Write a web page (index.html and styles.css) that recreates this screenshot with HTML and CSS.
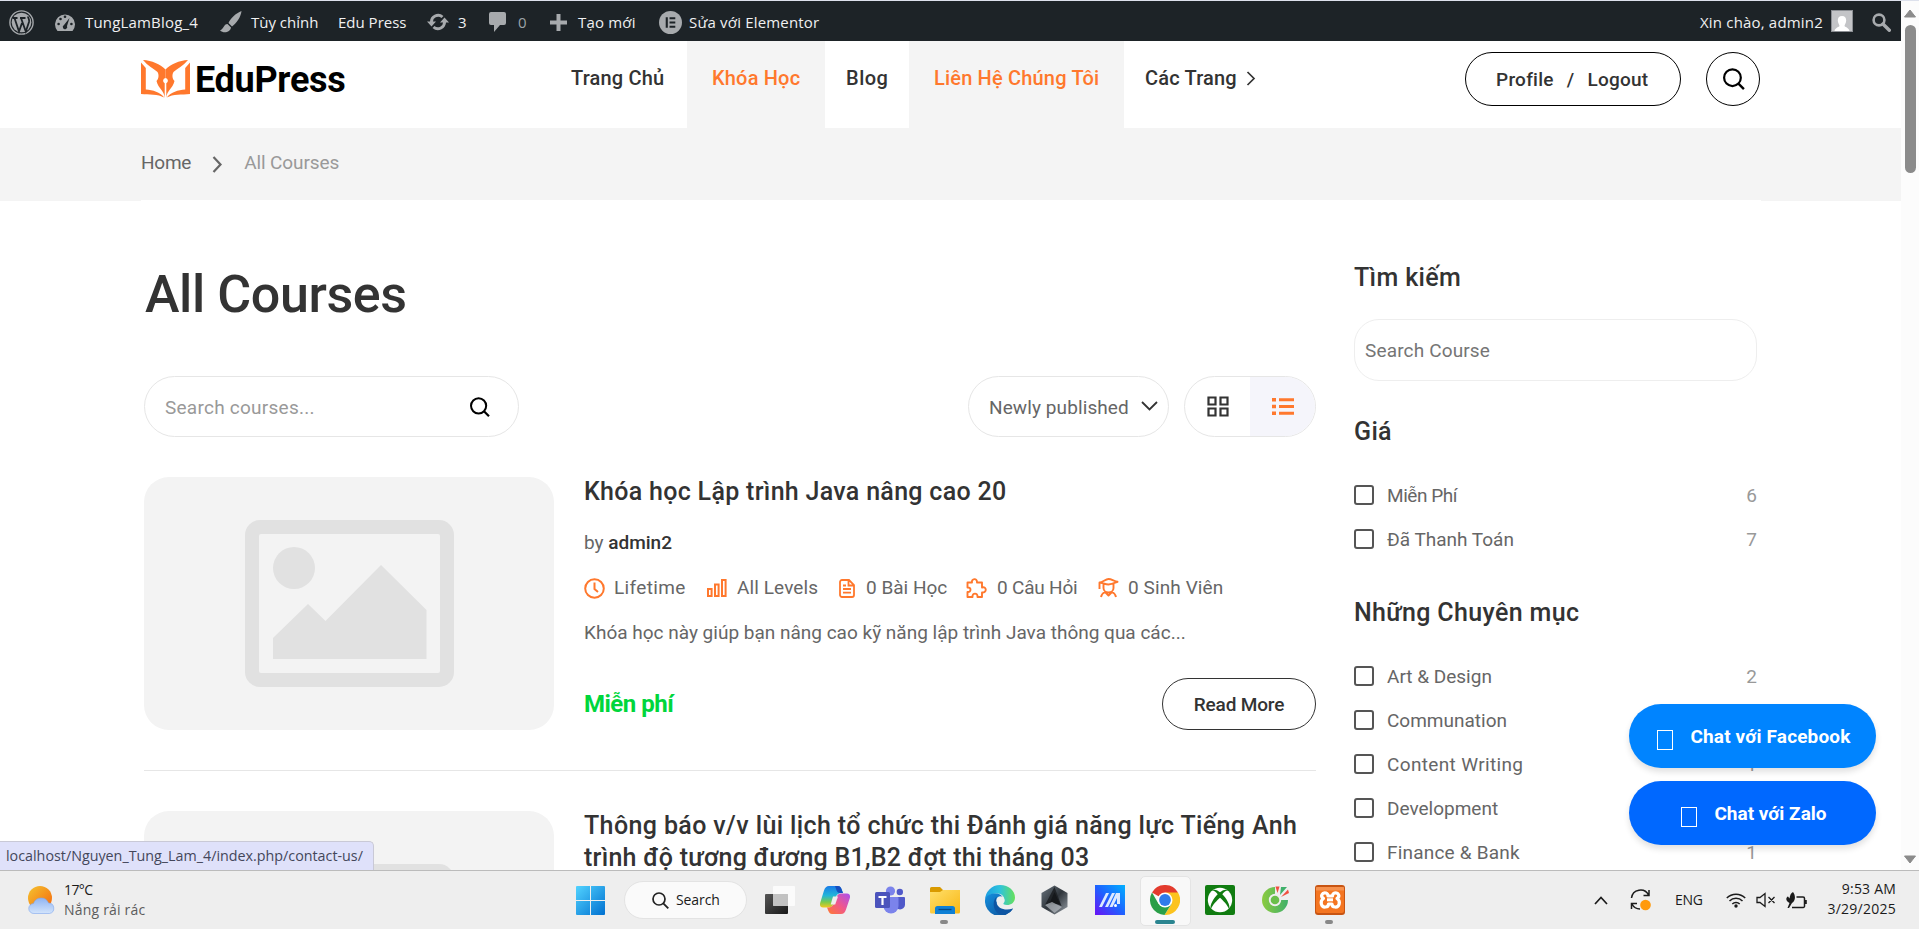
FILE: index.html
```html
<!DOCTYPE html>
<html lang="vi">
<head>
<meta charset="utf-8">
<title>All Courses</title>
<link rel="stylesheet" href="styles.css">
</head>
<body>
<svg width="0" height="0" class="defs">
  <defs>
    <symbol id="mag" viewBox="0 0 20 20"><circle cx="8.6" cy="8.8" r="7.6" fill="none" stroke="currentColor" stroke-width="2"/><path d="M14 14.2l5 5" stroke="currentColor" stroke-width="2.2"/></symbol>
    <symbol id="photo" viewBox="0 0 410 253">
      <rect x="101" y="43" width="209" height="167" rx="15" fill="#e1e1e1"/>
      <rect x="115" y="57" width="181" height="139" rx="2" fill="#f3f3f3"/>
      <circle cx="150" cy="91" r="21" fill="#e1e1e1"/>
      <path d="M129 161l35-34 17.500 17 55.500-56 45.500 45v49H129z" fill="#e1e1e1"/>
    </symbol>
    <linearGradient id="win" x1="0" y1="0" x2="1" y2="1"><stop offset="0" stop-color="#52d3ff"/><stop offset="1" stop-color="#0070d0"/></linearGradient>
    <linearGradient id="sun" x1="0" y1="0" x2="1" y2="1"><stop offset="0" stop-color="#f4c430"/><stop offset="1" stop-color="#f5650c"/></linearGradient>
    <linearGradient id="cloud" x1="0" y1="0" x2="0" y2="1"><stop offset="0" stop-color="#8fb4f2"/><stop offset="1" stop-color="#d3e4fb"/></linearGradient>
    <linearGradient id="tvd" x1="0" y1="0" x2="1" y2="1"><stop offset="0" stop-color="#555"/><stop offset="1" stop-color="#181818"/></linearGradient>
    <linearGradient id="cpA" x1="0" y1="0" x2="0" y2="1"><stop offset="0" stop-color="#1a7be8"/><stop offset=".45" stop-color="#22b6d8"/><stop offset=".75" stop-color="#7ccb4c"/><stop offset="1" stop-color="#f3c81f"/></linearGradient>
    <linearGradient id="cpB" x1="0" y1="1" x2="1" y2="0"><stop offset="0" stop-color="#ff7a2e"/><stop offset=".5" stop-color="#f0578c"/><stop offset="1" stop-color="#a94ff0"/></linearGradient>
    <linearGradient id="fold" x1="0" y1="0" x2="1" y2="1"><stop offset="0" stop-color="#ffdf6b"/><stop offset="1" stop-color="#f8b714"/></linearGradient>
    <linearGradient id="edgeA" x1="0" y1="0" x2="1" y2="0"><stop offset="0" stop-color="#1b9de2"/><stop offset=".5" stop-color="#2fc3dc"/><stop offset="1" stop-color="#66e05a"/></linearGradient>
    <linearGradient id="edgeB" x1="0" y1="0" x2="1" y2="1"><stop offset="0" stop-color="#1590df"/><stop offset="1" stop-color="#0b4c94"/></linearGradient>
    <linearGradient id="hex" x1="0" y1="0" x2="1" y2="1"><stop offset="0" stop-color="#6b7680"/><stop offset=".5" stop-color="#30363c"/><stop offset="1" stop-color="#98a0a8"/></linearGradient>
    <linearGradient id="ma" x1="0" y1="1" x2="1" y2="0"><stop offset="0" stop-color="#6a11f5"/><stop offset=".5" stop-color="#1e62ff"/><stop offset="1" stop-color="#00b0ff"/></linearGradient>
    <linearGradient id="coc" x1="0" y1="0" x2="1" y2="0"><stop offset="0" stop-color="#8ccb3f"/><stop offset="1" stop-color="#3fb06a"/></linearGradient>
  </defs>
</svg>

<div class="window-edge"></div>
<div class="viewport">
  <div class="page">
    <div class="adminbar">
      <div class="ab"><svg width="25" height="25" viewBox="0 0 25 25"><circle cx="12.500" cy="12.500" r="11.600" fill="none" stroke="#a7aaad" stroke-width="1.400"/><circle cx="12.500" cy="12.500" r="9.800" fill="#a7aaad"/><path d="M3.500 8h5M11 8h5.500M5.500 8l4.500 13.500 3-8.500M12 8l4.800 13.500L20 12c.8-3-1-3.500-1-5.500" fill="none" stroke="#1d2327" stroke-width="1.800"/></svg></div>
      <div class="ab"><svg width="20" height="18" viewBox="0 0 20 18"><path d="M2.500 18A10 10 0 1 1 17.500 18z" fill="#a7aaad"/><g fill="#1d2327"><circle cx="3.600" cy="11" r="1.300"/><circle cx="5.500" cy="6" r="1.300"/><circle cx="10" cy="3.800" r="1.300"/><circle cx="16.400" cy="11" r="1.300"/><path d="M14.500 5l-2.500 8a2.200 2.200 0 1 1-3-1z"/></g></svg><span class="g10 w1">TungLamBlog_4</span></div>
      <div class="ab"><svg width="22" height="22" viewBox="0 0 22 22" fill="#a7aaad"><path d="M21.500 0C16 2 10 8 8.500 12l3.500 3.500C16 13 21 6 21.500 0zM7.500 13c-4 0-3.500 5-7.500 6.500 4 3.500 10.500 1.500 11-3z"/></svg><span class="g9">Tùy chỉnh</span></div>
      <div class="ab"><span>Edu Press</span></div>
      <div class="ab"><svg width="22" height="18" viewBox="0 0 22 18"><path d="M4.500 9.500A6.600 6.600 0 0 1 15.500 4M17.500 8.500A6.600 6.600 0 0 1 6.500 14" fill="none" stroke="#a7aaad" stroke-width="2.900"/><path d="M0 8.500h9l-4.500 5zM13 9.500h9L17.500 4.500z" fill="#a7aaad"/></svg><span class="g9">3</span></div>
      <div class="ab dim"><svg width="17" height="20" viewBox="0 0 17 20"><path d="M2 0h13a2 2 0 0 1 2 2v9a2 2 0 0 1-2 2h-4l-6 7v-7H2a2 2 0 0 1-2-2V2a2 2 0 0 1 2-2z" fill="#a7aaad"/></svg><span class="g12">0</span></div>
      <div class="ab"><svg width="17" height="17" viewBox="0 0 17 17"><path d="M6.500 0h4v6.500H17v4h-6.500V17h-4v-6.500H0v-4h6.500z" fill="#a7aaad"/></svg><span class="g11 w1">Tạo mới</span></div>
      <div class="ab"><svg width="23" height="23" viewBox="0 0 24 24"><circle cx="12" cy="12" r="12" fill="#a7aaad"/><path d="M7 6.500h2.200v11H7zM11 6.500h6v2.200h-6zM11 10.900h6v2.200h-6zM11 15.300h6v2.200h-6z" fill="#1d2327"/></svg><span class="g7 w1">Sửa với Elementor</span></div>
      <div class="ab"><span class="w1">Xin chào, admin2</span><svg class="avatar" width="22" height="22" viewBox="0 0 22 22"><rect width="22" height="22" fill="#8c8f94"/><rect x="1" y="1" width="20" height="20" fill="#c3c4c7"/><path d="M11 6c3 0 4.200 2 4.200 4.500S13.500 15 13.500 16s4.500 1.500 5 5h-15c.5-3.500 5-4 5-5s-1.700-3-1.700-5.500S8 6 11 6z" fill="#fff"/></svg></div>
      <div class="ab"><svg width="19" height="19" viewBox="0 0 19 19"><circle cx="7" cy="7" r="5.400" fill="none" stroke="#a7aaad" stroke-width="2.600"/><path d="M11 11l6.300 6.300" stroke="#a7aaad" stroke-width="3.400" stroke-linecap="round"/></svg></div>
    </div>

    <header class="header">
      <a class="logo"><svg width="50" height="38" viewBox="0 0 50 38"><g fill="#ff782d"><path d="M0 2.500L4.800 8v21.500C12 30 19 32 23.200 37.500 17 34 8 35 0 34z"/><path d="M2 0c9 .5 17 4 22.500 9.500V18a2.800 2.800 0 0 0-.8 5.300V38C23 30 17.500 29 15.500 21c2.500-2.500 2.500-6.500 1-9C12.500 8.500 7 6 2 0z"/><path d="M49 2.500L44.200 8v21.500C37 30 30 32 25.800 37.500 32 34 41 35 49 34z"/><path d="M47 0c-9 .5-17 4-22.500 9.500V18a2.800 2.800 0 0 1 .8 5.300V38C26 30 31.500 29 33.500 21c-2.500-2.500-2.500-6.500-1-9C36.500 8.500 42 6 47 0z"/></g></svg><span>EduPress</span></a>
      <nav class="nav">
        <a class="n1">Trang Chủ</a><a class="n2 on">Khóa Học</a><a class="n3">Blog</a><a class="n4 on">Liên Hệ Chúng Tôi</a><a class="n5">Các Trang<svg width="10" height="15" viewBox="0 0 10 15"><path d="M1.500 1l6.500 6.500L1.500 14" fill="none" stroke="#333" stroke-width="1.700"/></svg></a>
      </nav>
      <div class="account"><a>Profile</a><i>/</i><a>Logout</a></div>
      <div class="round-search"><svg width="22" height="22"><use href="#mag"/></svg></div>
    </header>

    <div class="crumbs"><div class="crumbs-in"><span>Home</span><svg width="11" height="17" viewBox="0 0 11 17"><path d="M1.500 1l7 7.500-7 7.500" fill="none" stroke="#666" stroke-width="2.200"/></svg><span class="cur">All Courses</span></div></div>

    <div class="content">
      <main class="main">
        <h1>All Courses</h1>
        <div class="tools">
          <div class="search"><span>Search courses...</span><svg width="20" height="20"><use href="#mag"/></svg></div>
          <div class="select"><span>Newly published</span><svg width="17" height="10" viewBox="0 0 17 10"><path d="M1 1l7.500 7.500L16 1" fill="none" stroke="#333" stroke-width="1.800"/></svg></div>
          <div class="toggle">
            <div><svg width="22" height="21" viewBox="0 0 22 21" fill="none" stroke="#333" stroke-width="2.200"><path d="M1.500 1.500h7v7h-7zM13.500 1.500h7v7h-7zM1.500 12.500h7v7h-7zM13.500 12.500h7v7h-7z"/></svg></div>
            <div class="lit"><svg width="22" height="17" viewBox="0 0 22 17" fill="#ff782d"><path d="M0 0h4v3.500H0zM7 .3h15v3H7zM0 6.700h4v3.500H0zM7 7h15v3H7zM0 13.500h4V17H0zM7 13.700h15v3H7z"/></svg></div>
          </div>
        </div>

        <article class="card">
          <div class="thumb"><svg width="410" height="253"><use href="#photo"/></svg></div>
          <div class="info">
            <h3>Khóa học Lập trình Java nâng cao 20</h3>
            <div class="by">by <b>admin2</b></div>
            <div class="meta">
              <div class="m1"><svg width="21" height="21" viewBox="0 0 21 21" fill="none" stroke="#ff782d" stroke-width="2"><circle cx="10.500" cy="10.500" r="9.300"/><path d="M10.500 4.500v6.500l3.500 3"/></svg><span>Lifetime</span></div>
              <div class="m2"><svg width="20" height="18" viewBox="0 0 20 18" fill="none" stroke="#ff782d" stroke-width="2"><path d="M1 10h3.600v7H1zM8 5.500h3.600V17H8zM15 1h3.600v16H15z"/></svg><span>All Levels</span></div>
              <div class="m3"><svg width="16" height="19" viewBox="0 0 16 19" fill="none" stroke="#ff782d" stroke-width="1.800"><path d="M1 3a2 2 0 0 1 2-2h7l5 5v10a2 2 0 0 1-2 2H3a2 2 0 0 1-2-2zM9.500 1v5.500H15M4 6.500h3M4 10h8M4 13.700h8"/></svg><span>0 Bài Học</span></div>
              <div class="m4"><svg width="21" height="20" viewBox="0 0 21 20" fill="none" stroke="#ff782d" stroke-width="1.900" stroke-linejoin="round"><path d="M1.500 4.500H6c-1-4 5.500-5 5-0h5v5c5-1.500 5 5.500 0 5V19h-4.500c.5-4.500-5.500-4.500-5 0h-5v-5c4 .5 4-5 0-4.500z"/></svg><span>0 Câu Hỏi</span></div>
              <div class="m5"><svg width="21" height="20" viewBox="0 0 21 20" fill="none" stroke="#ff782d" stroke-width="1.900" stroke-linejoin="round"><path d="M1.500 4.500c3 0 6-3.500 9-3.500s6 2.500 9 2.800c-3 1.200-6 2.700-9 2.700S4.500 4.800 1.500 4.500zM1.500 4.500V11M5.500 6v4c0 3 2.500 4.500 5 4.500s5-1.500 5-4.500V6M3 19c.5-3 2-4 4-5l3.500 3.500L14 14c2 1 3.500 2 4 5"/></svg><span>0 Sinh Viên</span></div>
            </div>
            <p>Khóa học này giúp bạn nâng cao kỹ năng lập trình Java thông qua các...</p>
            <div class="foot"><strong>Miễn phí</strong><a class="more">Read More</a></div>
          </div>
        </article>
        <article class="card last">
          <div class="thumb"><svg width="410" height="253" class="low"><use href="#photo"/></svg></div>
          <div class="info"><h3>Thông báo v/v lùi lịch tổ chức thi Đánh giá năng lực Tiếng Anh<br><span class="tight">trình độ tương đương B1,B2 đợt thi tháng 03</span></h3></div>
        </article>
      </main>

      <aside class="side">
        <h2>Tìm kiếm</h2>
        <div class="side-search">Search Course</div>
        <h2>Giá</h2>
        <ul>
          <li><i></i><span class="narrow">Miễn Phí</span><em>6</em></li>
          <li><i></i><span>Đã Thanh Toán</span><em>7</em></li>
        </ul>
        <h2>Những Chuyên mục</h2>
        <ul>
          <li><i></i><span>Art &amp; Design</span><em>2</em></li>
          <li><i></i><span>Communation</span></li>
          <li><i></i><span class="wide">Content Writing</span><em>1</em></li>
          <li><i></i><span>Development</span></li>
          <li><i></i><span class="mid">Finance &amp; Bank</span><em>1</em></li>
        </ul>
      </aside>
    </div>
  </div>
  <div class="scrollbar">
    <svg width="14" height="9" viewBox="0 0 14 9"><path d="M7 1l5.500 7h-11z" fill="#8b8b8b" stroke="#8b8b8b" stroke-linejoin="round"/></svg>
    <div class="thumbbar"></div>
    <svg width="14" height="9" viewBox="0 0 14 9"><path d="M7 8L1.500 1h11z" fill="#8b8b8b" stroke="#8b8b8b" stroke-linejoin="round"/></svg>
  </div>
  <div class="chat">
    <a class="fb"><i></i>Chat với Facebook</a>
    <a class="zalo"><i></i>Chat với Zalo</a>
  </div>
  <div class="status">localhost/Nguyen_Tung_Lam_4/index.php/contact-us/</div>
</div>

<footer class="taskbar">
  <div class="weather"><svg width="27" height="28" viewBox="0 0 27 28"><circle cx="12" cy="12" r="12" fill="url(#sun)"/><path d="M6 27.500a5 5 0 0 1-.5-10A8 8 0 0 1 20.500 17a5.300 5.300 0 0 1 1 10.500z" fill="url(#cloud)" stroke="#7ea6ee" stroke-width=".6"/></svg><div><div class="temp">17°C</div><div class="cond">Nắng rải rác</div></div></div>
  <svg class="start" width="29" height="29" viewBox="0 0 29 29"><path d="M1 0h13v14H0V1a1 1 0 0 1 1-1zM15 0h13a1 1 0 0 1 1 1v13H15zM0 15h14v14H1a1 1 0 0 1-1-1zM15 15h14v13a1 1 0 0 1-1 1H15z" fill="url(#win)"/></svg>
  <div class="pill"><svg width="17" height="17" viewBox="0 0 17 17"><circle cx="7" cy="7" r="6" fill="none" stroke="#222" stroke-width="1.700"/><path d="M11.300 11.300l5 5" stroke="#222" stroke-width="1.900"/></svg><span>Search</span></div>
  <div class="apps">
    <div><svg width="30" height="28" viewBox="0 0 30 28"><rect y="8" width="23" height="20" rx="1" fill="url(#tvd)"/><rect x="8" width="22" height="20" rx="1" fill="#fff" opacity=".78"/><rect x="8" y="8" width="15" height="12" fill="#bbb" opacity=".7"/></svg></div>
    <div><svg width="30" height="28" viewBox="0 0 30 28"><path d="M9 0h9c3 0 3.500 3 5 7-5 0-6.500 1.500-7.500 5l-2 6c-1 2.500-2.500 3.500-5 3.500H3C0 21.500-.5 19 .3 16.500L4 4.500C5 1.500 6.500 0 9 0z" fill="url(#cpA)"/><path d="M21 28h-9c-3 0-3.500-3-5-6.500 5 0 6.500-2 7.500-5.500l2-5c1-2.500 2.500-3.500 5-3.500H27c3 0 3.500 2.500 2.700 5L26 23.500c-1 3-2.500 4.500-5 4.500z" fill="url(#cpB)"/><path d="M15 0h3c3 0 3.500 3 5 7h-3.500C17 7 16.500 4 15 0z" fill="#164fc0"/><path d="M13 10.500h5l-2.800 8h-4.500z" fill="#eee"/></svg></div>
    <div><svg width="30" height="28" viewBox="0 0 30 28"><circle cx="24.800" cy="6" r="3.200" fill="#5059c9"/><path d="M20 11h9a1 1 0 0 1 1 1v6.500a5 5 0 0 1-10 0z" fill="#5059c9"/><circle cx="15.500" cy="5" r="4.600" fill="#7b83eb"/><path d="M9 11h13.500a1 1 0 0 1 1 1v8a7.500 7.500 0 0 1-15 0z" fill="#7b83eb"/><rect y="6" width="15" height="16" rx="1.500" fill="#4b53bc"/><path d="M3.500 10h8v2H8.600v7H6.400v-7H3.500z" fill="#fff"/></svg></div>
    <div class="run"><svg width="30" height="28" viewBox="0 0 30 28"><path d="M1.500 1H10l3 3h15.500A1.500 1.500 0 0 1 30 5.500V9H0V2.500A1.500 1.500 0 0 1 1.500 1z" fill="#d99a00"/><path d="M0 6h10l3-2h17v22a1.500 1.500 0 0 1-1.500 1.500h-27A1.500 1.500 0 0 1 0 26z" fill="url(#fold)"/><path d="M5 28v-5.500a2.500 2.500 0 0 1 2.500-2.500h15a2.500 2.500 0 0 1 2.500 2.500V28z" fill="#0f80d5"/><path d="M8.500 23.500h13" stroke="#064a86" stroke-width="1.300"/></svg></div>
    <div><svg width="30" height="30" viewBox="0 0 30 30"><path d="M0 15A15 15 0 0 1 15 0c9 0 15 6 15 12.500 0 5-4 7.500-8 7.500-3 0-4.500-1-4-2.500 3-4 0-9-6-9C5 8.500 1 12 0 15z" fill="url(#edgeA)"/><path d="M0 15C1 10 5.500 8.500 11 8.500c4.500 0 8.500 3.500 7 8.500-.5-3-6-3-6.500 1.500C11 23 16 26.500 21 26c3-.4 5-1.600 7-2.500A15 15 0 0 1 0 15z" fill="url(#edgeB)"/><path d="M11.500 12C6 17 9 29 17 29.800 22 29.500 26 27 28 23.500 21 26 12 24 11.500 17z" fill="#0d55a3"/><circle cx="15.500" cy="15.500" r="4.200" fill="#eee"/></svg></div>
    <div><svg width="27" height="30" viewBox="0 0 27 30"><path d="M13.500.5L26.500 8v14l-13 7.500L.5 22V8z" fill="url(#hex)"/><path d="M13.500 2L4 20l7-3 9.500 4z" fill="#202428"/><path d="M13.500 7L19 19l-11 .5z" fill="#15181b"/><path d="M4 20l7-3 10 5-7.500 6z" fill="#b6bcc2" opacity=".7"/></svg></div>
    <div><svg width="30" height="30" viewBox="0 0 30 30"><rect width="30" height="30" fill="url(#ma)"/><path d="M4 22L11 8h3L7 22zM10 22L17 8h3l-7 14zM21 8h4v11h-3v-6l-4.500 9h-3z" fill="#dbe9ff"/><circle cx="20.500" cy="20.500" r="1.500" fill="#fff"/></svg></div>
    <div class="active"><svg width="30" height="30" viewBox="0 0 30 30"><path d="M15 15L2 7.500A15 15 0 0 1 28 7.500z" fill="#e33b2e"/><path d="M15 7.500h13A15 15 0 0 1 14.500 30L21.500 19z" fill="#fcc31e"/><path d="M2 7.500A15 15 0 0 0 14.500 30L21.500 18.800 8.500 18.800z" fill="#2a9f48"/><circle cx="15" cy="15" r="7.500" fill="#fff"/><circle cx="15" cy="15" r="5.900" fill="#2f7bea"/></svg></div>
    <div><svg width="30" height="30" viewBox="0 0 30 30"><rect width="30" height="30" rx="2" fill="#107c10"/><circle cx="15" cy="15" r="12.200" fill="#fff"/><path d="M6.500 5.500C9.500 3.500 13 5.500 15 7.200 17 5.500 20.500 3.500 23.500 5.500 21 5 18.500 7.500 17.300 9.300 21 13 26 20.500 24 24 22.500 20 18 15.500 15 12.800 12 15.500 7.500 20 6 24c-2-3.500 3-11 6.700-14.700C11.500 7.500 9 5 6.500 5.500z" fill="#107c10"/></svg></div>
    <div><svg width="30" height="30" viewBox="0 0 30 30"><path d="M15 2A13 13 0 1 0 28 15H20.500a5.500 5.500 0 1 1-5.500-5.500z" fill="url(#coc)"/><circle cx="15" cy="15" r="6.200" fill="#eee"/><circle cx="15" cy="15" r="4.300" fill="#6abf4b"/><path d="M15.500 1.500h4L17.500 8z" fill="#f04e3e"/><path d="M21 2h6l-7 8z" fill="#3fb06a"/><path d="M28 4.500l1 3.500-8 4z" fill="#f04e3e"/></svg></div>
    <div class="run"><svg width="30" height="30" viewBox="0 0 30 30"><rect width="30" height="30" rx="3" fill="#c85412"/><rect x="1" y="2" width="28" height="26" rx="2" fill="#f47521"/><path d="M1 2h28v3.500H1z" fill="#f9a56c" opacity=".6"/><path d="M11 8c-4-1-6 3.500-2.500 5.500C4.500 16 6 22.500 10.500 22c2 0 3-1 3-3h3.500c0 2 1 3 3 3 4.500.5 6-6 2-8.500C25.500 11.500 23.500 7 19.500 8c-1.500.5-2 1.500-2 3h-4.500c0-1.500-.5-2.500-2-3z" fill="none" stroke="#fff" stroke-width="3.200" stroke-linejoin="round"/><path d="M12 14.800h6" stroke="#fff" stroke-width="3"/></svg></div>
  </div>
  <div class="tray">
    <svg width="14" height="9" viewBox="0 0 14 9"><path d="M1 8l6-6.500L13 8" fill="none" stroke="#1b1b1b" stroke-width="1.700"/></svg>
    <svg class="t2" width="22" height="22" viewBox="0 0 22 22" fill="none" stroke="#1b1b1b" stroke-width="1.500"><path d="M1.500 9A9 9 0 0 1 18.500 6M19 1v5.500h-5.500M1.500 20v-5.500H7M2 15a9 9 0 0 0 8 5"/><circle cx="15.500" cy="16" r="5.300" fill="#ff9a0c" stroke="none"/></svg>
    <span class="t3">ENG</span>
    <svg class="t4" width="20" height="16" viewBox="0 0 20 16" fill="none" stroke="#1b1b1b" stroke-width="1.500"><path d="M.8 6a13 13 0 0 1 18.400 0M3.500 9a9.200 9.200 0 0 1 13 0M6.300 12a5.200 5.200 0 0 1 7.400 0"/><circle cx="10" cy="14" r="1.700" fill="#1b1b1b" stroke="none"/></svg>
    <svg class="t5" width="20" height="16" viewBox="0 0 20 16" fill="none" stroke="#1b1b1b" stroke-width="1.300"><path d="M1 5.500h3L9 1.500v13l-5-4H1zM12.500 5l6 6M18.500 5l-6 6"/></svg>
    <svg class="t6" width="21" height="17" viewBox="0 0 21 17"><path d="M10.500 5H17a1.500 1.500 0 0 1 1.500 1.500v7A1.500 1.500 0 0 1 17 15.500H6" fill="none" stroke="#1b1b1b" stroke-width="1.500"/><path d="M19 8h1.800v4H19zM7 0c2.500 3 3 8.500-1 11L3 16H1.500l2-5C-1 9 0 5 2 4.500l1.500 2C4 3 5 1 7 0z" fill="#1b1b1b"/></svg>
    <div class="clock"><div>9:53 AM</div><div class="date">3/29/2025</div></div>
  </div>
</footer>
</body>
</html>
```
FILE: styles.css
```css
*{box-sizing:border-box}
body{margin:0;width:1919px;height:929px;overflow:hidden;background:#fff;color:#666;font:400 19px/28px Roboto,sans-serif;display:flex;flex-direction:column}
h1,h2,h3,p,ul{margin:0;padding:0;font-weight:500;color:#333}
ul{list-style:none}
i,em{font-style:normal}
svg{display:block;flex:none}
.defs{position:absolute}
.window-edge{height:1px;background:#dde1ec;flex:none}
.viewport{position:relative;flex:none;height:869px;display:flex;overflow:hidden}
.page{width:1901px;height:869px;overflow:hidden}

.adminbar{height:40px;background:#1d2327;padding:2px 0 0 9px;display:grid;grid-template-columns:46px 165px 118px 89px 62px 61px 109px 1041px 172px 20px;align-items:center;color:#f0f0f1;font:15px/20px "Open Sans",sans-serif}
.ab{display:flex;align-items:center;height:26px;white-space:nowrap}
.dim{color:#9ca2a7}
.g7{margin-left:7px}.g9{margin-left:9px}.g10{margin-left:10px}.g11{margin-left:11px}.g12{margin-left:12px}
.w1{letter-spacing:.18px}
.avatar{margin-left:8px;margin-top:-3px}

.header{height:87px;padding-left:141px;display:flex;align-items:flex-start}
.logo{display:flex;width:410px;padding-top:19px;color:#000;font:700 36px/38px Roboto,sans-serif;letter-spacing:-.3px}
.logo span{margin:1px 0 0 4px}
.nav{display:flex;height:87px;width:914px;color:#333;font-size:20px;font-weight:500;letter-spacing:.18px}
.nav a{padding-top:23px;flex:none}
.nav .on{background:#f4f4f4;color:#ff782d}
.n1{width:136px;padding-left:20px}
.n2{width:138px;padding-left:25px}
.n3{width:84px;padding-left:21px;letter-spacing:.5px}
.n4{width:215px;padding-left:25px}
.n5{padding-left:21px;display:flex}
.n5 svg{margin:7px 0 0 9px}
.account{width:216px;height:54px;margin-top:11px;border:1px solid #000;border-radius:27px;display:flex;align-items:center;padding:2px 0 0 30px;color:#333;font-weight:500;letter-spacing:.25px}
.account i{margin:0 13px 0 13px}
.round-search{width:54px;height:54px;margin:11px 0 0 25px;border:1px solid #000;border-radius:50%;display:flex;align-items:center;justify-content:center;color:#000}
.round-search svg{margin-left:2px}

.crumbs{height:73px;background:#f4f4f4;padding:0 140px 0 141px}
.crumbs-in{height:73px;border-bottom:1px solid #fff;display:flex;align-items:center}
.crumbs-in svg{margin:1px 21px 0 21px}
.crumbs-in span{letter-spacing:-.25px;margin-top:-2px}
.crumbs-in .cur{color:#999;letter-spacing:-.1px}

.content{display:flex;padding-left:144px}
.main{width:1172px;padding-top:64px}
h1{font-size:52px;line-height:60px;letter-spacing:-.4px;padding-left:1px}
.tools{margin-top:51px;height:61px;display:flex}
.tools>div{border:1px solid #e6e6e6;border-radius:31px;height:61px;display:flex;align-items:center}
.search{width:375px;padding-left:20px}
.search span{width:305px;color:#999;padding-top:2px;letter-spacing:.25px}
.search svg{color:#000}
.select{width:201px;margin-left:449px;padding-left:20px}
.select span{width:152px;padding-top:2px;letter-spacing:.1px}
.select svg{margin-top:-2px}
.toggle{width:132px;margin-left:15px;overflow:hidden}
.toggle div{width:65px;height:59px;display:flex;align-items:center;justify-content:center;padding-left:1px}
.toggle .lit{background:#f5f5fb;width:66px}
.card{margin-top:40px;height:294px;border-bottom:1px solid #e6e6e6;display:flex}
.last{border:0}
.thumb{width:410px;height:253px;border-radius:25px;background:#f3f3f3;overflow:hidden;flex:none}
.low{position:relative;top:10px}
.info{width:732px;margin-left:30px;margin-top:-1px;flex:none}
h3{font-size:25px;line-height:32px;letter-spacing:.3px;white-space:nowrap}
.last h3{letter-spacing:.38px}
.tight{letter-spacing:.25px}
.by{margin-top:21px}
.by b{color:#333;font-weight:500}
.meta{margin-top:17px;display:grid;grid-template-columns:123px 132px 127px 132px 130px}
.meta div{display:flex;align-items:center}
.meta span{white-space:nowrap}
.m1 span{margin-left:9px;letter-spacing:.35px}
.m2 span{margin-left:10px;letter-spacing:.1px}
.m3 span{margin-left:11px}
.m4 span{margin-left:10px;letter-spacing:-.2px}
.m5 span{margin-left:9px;letter-spacing:.1px}
.info p{margin-top:17px;color:#666;font-weight:400}
.foot{margin-top:31px;height:52px;display:flex;justify-content:space-between;align-items:center}
.foot strong{font-size:24px;color:#00d63c;letter-spacing:-.5px}
.more{width:154px;height:52px;border:1px solid #333;border-radius:26px;display:flex;align-items:center;justify-content:center;padding-top:2px;font-weight:500;color:#333;letter-spacing:-.15px}

.side{width:403px;margin-left:38px;padding-top:61px}
h2{font-size:25px;line-height:32px;letter-spacing:.35px}
.side-search{margin:25px 0 35px;height:62px;border:1px solid #eee;border-radius:25px;padding:17px 0 0 10px;color:#757575;letter-spacing:.15px}
.side ul{margin:26px 0 35px;color:#666;font-weight:400}
.side li{height:44px;display:flex;align-items:center}
.side li i{width:20px;height:20px;border:2px solid #555;border-radius:3px;margin:-2px 13px 0 0}
.side li em{margin-left:auto;color:#999}
.wide{letter-spacing:.35px}
.mid{letter-spacing:.2px}
.narrow{letter-spacing:-.45px}

.scrollbar{width:18px;background:#fcfcfc;display:flex;flex-direction:column;align-items:center}
.scrollbar svg:first-child{margin-top:8px}
.scrollbar svg:last-child{margin-top:682px}
.thumbbar{width:11px;height:148px;margin-top:7px;border-radius:6px;background:#8b8b8b}

.chat{position:absolute;left:1629px;top:703px;color:#fff;font-weight:700}
.chat a{width:247px;height:64px;border-radius:32px;display:flex;align-items:center;justify-content:center;box-shadow:0 4px 6px rgba(0,0,0,.12)}
.chat .fb{background:#0084ff;margin-bottom:13px;letter-spacing:.16px;padding:1px 0 0 9px}
.chat .zalo{background:#0068ff;padding:1px 0 0 9px}
.chat i{width:16px;height:20px;border:1px solid #fff;margin:7px 17px 0 -6px}
.status{position:absolute;left:0;top:840px;height:29px;width:374px;background:#dfe1fa;border:1px solid #c9c9d6;border-width:1px 1px 0 0;border-radius:0 5px 0 0;padding:4px 0 0 6px;color:#44475a;font:14.300px/20px "Open Sans",sans-serif;white-space:nowrap}

.taskbar{height:59px;flex:none;border-top:1px solid #bbb;background:#eee;display:flex;align-items:center;color:#1b1b1b;font:14px/20px "Open Sans",sans-serif;letter-spacing:-.1px}
.weather{width:576px;padding-left:28px;display:flex;align-items:center}
.weather>div{margin:-1px 0 0 9px}
.temp{letter-spacing:-.6px}
.cond{color:#5c5c5c;letter-spacing:.2px}
.pill{width:123px;height:38px;margin-left:19px;border-radius:19px;background:#fafafa;border:1px solid #e3e3e3;display:flex;align-items:center;padding-left:27px}
.pill span{margin-left:7px}
.apps{display:flex;margin-left:5px}
.apps div{width:55px;height:58px;display:flex;align-items:center;justify-content:center;position:relative}
.apps div svg{position:relative}
.active::before{content:"";position:absolute;left:3px;top:5px;width:49px;height:48px;border-radius:5px;background:#f8f8f8;border:1px solid #e4e4e4}
.active::after{content:"";position:absolute;left:18px;top:49px;width:20px;height:4px;border-radius:2px;background:#2b8590}
.run::after{content:"";position:absolute;left:23px;top:49px;width:8px;height:4px;border-radius:2px;background:#888}
.tray{display:flex;align-items:center;margin-left:237px}
.t2{margin-left:22px}
.t3{margin-left:23px;width:29px;letter-spacing:-.3px}
.t4{margin-left:22px}
.t5{margin-left:10px}
.t6{margin-left:10px}
.clock{width:89px;text-align:right;margin-top:-2px;letter-spacing:.2px}
.date{letter-spacing:.25px}
```
